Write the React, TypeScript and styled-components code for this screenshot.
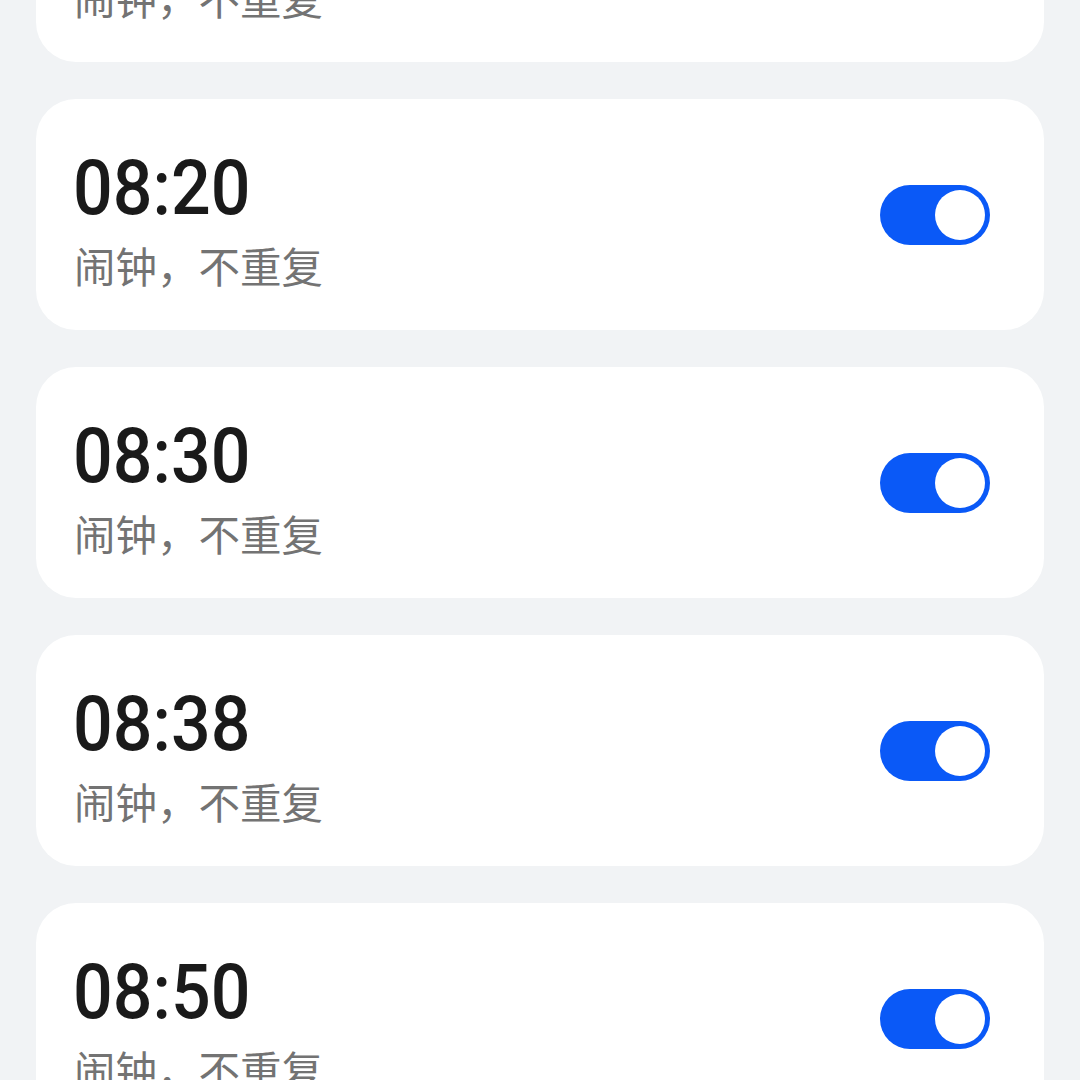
import React from 'react';
import styled, { createGlobalStyle } from 'styled-components';

type Alarm = {
  time: string;
  label: string;
  on: boolean;
};

const alarms: Alarm[] = [
  { time: '08:10', label: '闹钟，不重复', on: true },
  { time: '08:20', label: '闹钟，不重复', on: true },
  { time: '08:30', label: '闹钟，不重复', on: true },
  { time: '08:38', label: '闹钟，不重复', on: true },
  { time: '08:50', label: '闹钟，不重复', on: true },
];

const GlobalStyle = createGlobalStyle`
  html, body {
    margin: 0;
    padding: 0;
    background: #f1f3f5;
    overflow: hidden;
  }
  * {
    box-sizing: border-box;
  }
`;

export default function App() {
  return (
    <>
      <GlobalStyle />
      <Screen>
        <AlarmList>
          {alarms.map((alarm, i) => (
            <AlarmCard key={i}>
              <TextBlock>
                <Time>{alarm.time}</Time>
                <Label>{alarm.label}</Label>
              </TextBlock>
              <Toggle $on={alarm.on} aria-label="toggle">
                <Knob />
              </Toggle>
            </AlarmCard>
          ))}
        </AlarmList>
      </Screen>
    </>
  );
}

const Screen = styled.div`
  width: 1080px;
  height: 1080px;
  overflow: hidden;
  background: #f1f3f5;
`;

// list is scrolled, first card partly above the top edge
const AlarmList = styled.div`
  display: flex;
  flex-direction: column;
  gap: 37px;
  padding: 0 36px;
  margin-top: -169px;
`;

const AlarmCard = styled.div`
  display: flex;
  align-items: center;
  justify-content: space-between;
  height: 231px;
  padding: 0 54px 0 37px;
  background: #ffffff;
  border-radius: 40px;
`;

const TextBlock = styled.div`
  display: flex;
  flex-direction: column;
  align-items: flex-start;
  gap: 13px;
  padding-top: 8px;
`;

// clock digits in the reference are narrower than Roboto's
const Time = styled.div`
  font-family: Roboto, 'Noto Sans', sans-serif;
  font-size: 76px;
  font-weight: 500;
  line-height: 80px;
  color: #1a1a1a;
  transform: scaleX(0.92);
  transform-origin: left center;
`;

const Label = styled.div`
  font-family: 'Noto Sans CJK SC', 'Noto Sans', sans-serif;
  font-size: 41.5px;
  line-height: 48px;
  color: #737373;
  padding-left: 1px;
`;

const Toggle = styled.button<{ $on: boolean }>`
  display: flex;
  align-items: center;
  justify-content: ${(p) => (p.$on ? 'flex-end' : 'flex-start')};
  width: 110px;
  height: 60px;
  padding: 0 5px;
  border: none;
  border-radius: 30px;
  background: ${(p) => (p.$on ? '#0a59f7' : '#d8d8d8')};
  cursor: pointer;
`;

const Knob = styled.span`
  width: 50px;
  height: 50px;
  border-radius: 50%;
  background: #ffffff;
`;
